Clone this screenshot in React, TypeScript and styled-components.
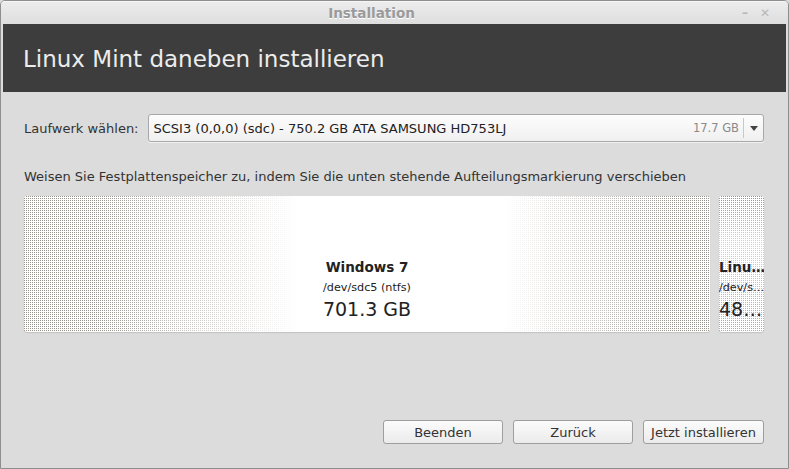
import React from "react";
import styled, { createGlobalStyle } from "styled-components";

const Global = createGlobalStyle`
  html, body { margin: 0; padding: 0; background: #dcdcdc; }
  body { font-family: "DejaVu Sans", "Liberation Sans", sans-serif; }
  * { box-sizing: border-box; }
`;

const Window = styled.div`
  width: 789px;
  height: 469px;
  border: 1px solid #8e8e8e;
  border-radius: 5px 5px 0 0;
  background: #dcdcdc;
  display: flex;
  flex-direction: column;
  overflow: hidden;
`;

const TitleBar = styled.div`
  height: 23px;
  display: flex;
  align-items: center;
  background: linear-gradient(#ececec, #dedede);
  border-top: 1px solid #f6f6f6;
`;

const Title = styled.div`
  flex: 1;
  text-align: center;
  font-size: 13.5px;
  font-weight: bold;
  color: #9a9a9a;
  text-shadow: 0 1px 0 #fff;
`;

const Controls = styled.div`
  width: 46px;
  display: flex;
  gap: 12px;
  color: #b8b8b8;
  font-size: 12px;
  font-weight: bold;
  align-items: center;
`;

const Header = styled.div`
  margin: 0 2px;
  height: 68px;
  background: #3d3d3d;
  color: #ececec;
  font-size: 23px;
  font-family: "DejaVu Sans", sans-serif;
  display: flex;
  align-items: center;
  padding-left: 20px;
  padding-top: 2px;
`;

const Content = styled.div`
  flex: 1;
  display: flex;
  flex-direction: column;
  padding: 22px 24px 24px 23px;
  color: #333;
  font-size: 13px;
`;

const DriveRow = styled.div`
  display: flex;
  align-items: center;
  gap: 9px;
`;

const Label = styled.span`
  white-space: nowrap;
`;

const Combo = styled.div`
  flex: 1;
  height: 28px;
  border: 1px solid #a8a8a8;
  border-radius: 3px;
  background: linear-gradient(#fdfdfd, #f0f0f0);
  display: flex;
  align-items: center;
  padding-left: 5px;
  box-shadow: 0 1px 0 rgba(255,255,255,0.6);
`;

const ComboText = styled.span`
  flex: 1;
  color: #222;
  white-space: nowrap;
`;

const ComboSize = styled.span`
  color: #8a8a8a;
  font-size: 11.5px;
  padding-right: 4px;
`;

const ComboSep = styled.span`
  width: 1px;
  height: 20px;
  background: #c8c8c8;
`;

const Arrow = styled.span`
  width: 19px;
  display: flex;
  justify-content: center;
  svg { display: block; }
`;

const Hint = styled.div`
  margin-top: 27px;
`;

const Bar = styled.div`
  margin-top: 12px;
  height: 136px;
  display: flex;
  gap: 9px;
`;

const dots = `
  linear-gradient(90deg, transparent 1px, #fff 1px) 0 0 / 2px 2px,
  linear-gradient(transparent 1px, #fff 1px) 0 0 / 2px 2px,
  #98928c
`;

const PartBox = styled.div<{ $grow: number; $fade: string }>`
  flex: ${(p) => p.$grow};
  min-width: 0;
  border-radius: 3px;
  position: relative;
  overflow: hidden;
  background: ${dots};
  box-shadow: 0 1px 1px rgba(0,0,0,0.12);
  display: flex;
  flex-direction: column;
  align-items: center;
  padding-top: 63px;
  color: #222;
  &::before {
    content: "";
    position: absolute;
    inset: 0;
    background: ${(p) => p.$fade};
  }
`;

const PartText = styled.div<{ $align: string }>`
  position: relative;
  width: 100%;
  display: flex;
  flex-direction: column;
  align-items: ${(p) => p.$align};
  text-align: center;
`;

const PartName = styled.div`
  font-weight: bold;
  font-size: 13.5px;
  white-space: nowrap;
`;

const PartDev = styled.div`
  font-size: 11.2px;
  margin-top: 6px;
  white-space: nowrap;
`;

const PartSize = styled.div`
  font-size: 19px;
  margin-top: 4px;
  white-space: nowrap;
`;

const Spacer = styled.div`
  flex: 1;
`;

const ButtonRow = styled.div`
  display: flex;
  justify-content: flex-end;
  gap: 10px;
`;

const Button = styled.button<{ $w: number }>`
  width: ${(p) => p.$w}px;
  height: 24px;
  border: 1px solid #9e9e9e;
  border-radius: 3px;
  background: linear-gradient(#fbfbfb, #ebebeb);
  color: #333;
  font-family: "DejaVu Sans", sans-serif;
  font-size: 13px;
  padding: 0;
`;

export default function App() {
  return (
    <>
      <Global />
      <Window>
        <TitleBar>
          <Title>Installation</Title>
          <Controls>
            <span>–</span>
            <span>✕</span>
          </Controls>
        </TitleBar>
        <Header>Linux Mint daneben installieren</Header>
        <Content>
          <DriveRow>
            <Label>Laufwerk wählen:</Label>
            <Combo>
              <ComboText>SCSI3 (0,0,0) (sdc) - 750.2 GB ATA SAMSUNG HD753LJ</ComboText>
              <ComboSize>17.7 GB</ComboSize>
              <ComboSep />
              <Arrow>
                <svg width="8" height="5" viewBox="0 0 8 5">
                  <path d="M0 0 H8 L4 5 Z" fill="#444" />
                </svg>
              </Arrow>
            </Combo>
          </DriveRow>
          <Hint>Weisen Sie Festplattenspeicher zu, indem Sie die unten stehende Aufteilungsmarkierung verschieben</Hint>
          <Bar>
            <PartBox
              $grow={686}
              $fade="linear-gradient(90deg, rgba(255,255,255,0) 10%, #fff 40%, #fff 70%, rgba(255,255,255,0) 95%)"
            >
              <PartText $align="center">
                <PartName>Windows 7</PartName>
                <PartDev>/dev/sdc5 (ntfs)</PartDev>
                <PartSize>701.3 GB</PartSize>
              </PartText>
            </PartBox>
            <PartBox
              $grow={45}
              $fade="linear-gradient(rgba(255,255,255,0) 0%, rgba(255,255,255,0.6) 35%, rgba(255,255,255,0.2) 100%)"
            >
              <PartText $align="flex-start">
                <PartName>Linu…</PartName>
                <PartDev>/dev/s…</PartDev>
                <PartSize>48…</PartSize>
              </PartText>
            </PartBox>
          </Bar>
          <Spacer />
          <ButtonRow>
            <Button $w={120}>Beenden</Button>
            <Button $w={120}>Zurück</Button>
            <Button $w={121}>Jetzt installieren</Button>
          </ButtonRow>
        </Content>
      </Window>
    </>
  );
}
